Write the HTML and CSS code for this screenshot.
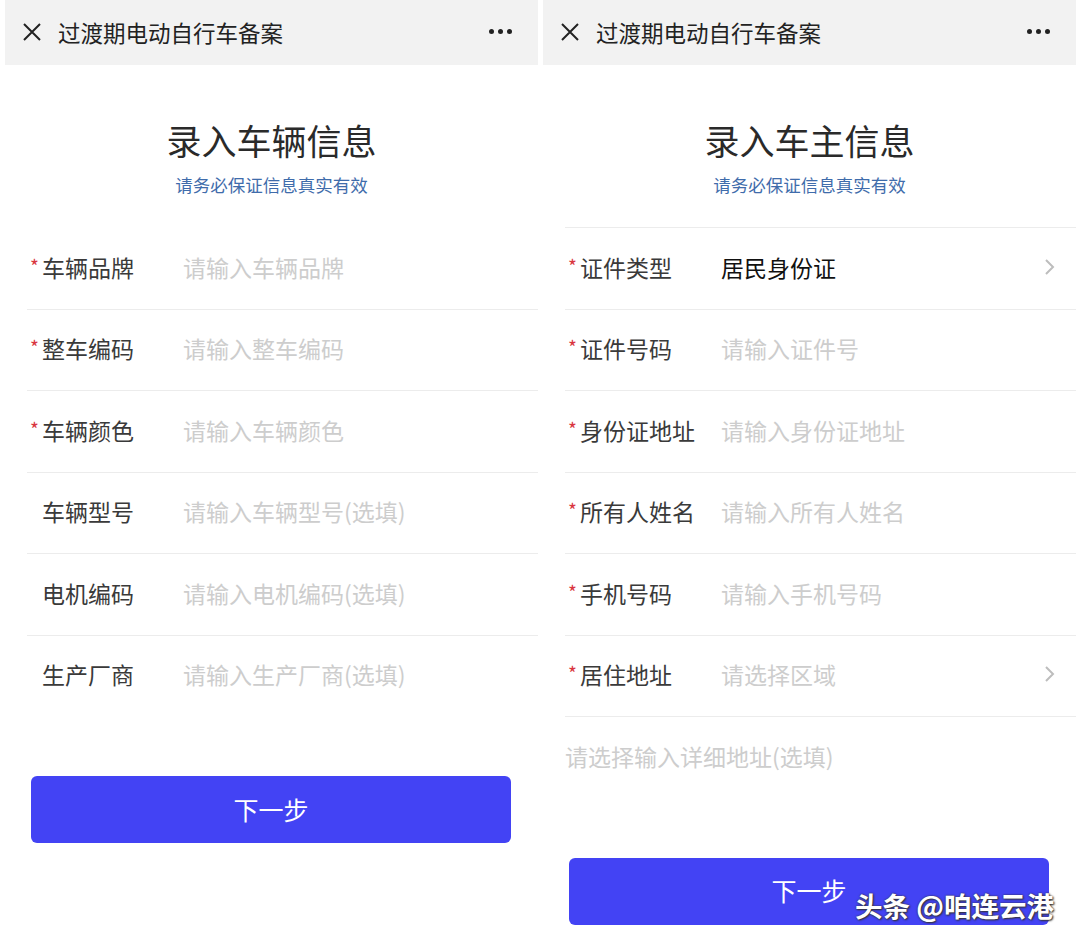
FILE: index.html
```html
<!DOCTYPE html>
<html lang="zh-CN">
<head>
    <meta charset="UTF-8">
    <meta name="viewport" content="width=device-width, initial-scale=1.0">
    <title>过渡期电动自行车备案</title>
    <link rel="stylesheet" href="styles.css">
</head>
<body>
    <div class="screens">
        <!-- 第一步：车辆信息 -->
        <div class="phone">
            <div class="top-bar">
                <svg class="close-icon" width="20" height="20" viewBox="0 0 20 20">
                    <path d="M2 2 L18 18 M18 2 L2 18" stroke="#222" stroke-width="2" fill="none"/>
                </svg>
                <span class="top-title">过渡期电动自行车备案</span>
                <span class="more"><i></i><i></i><i></i></span>
            </div>
            <h1 class="page-title">录入车辆信息</h1>
            <p class="page-tip">请务必保证信息真实有效</p>
            <div class="form">
                <div class="row"><span class="req">*</span><span class="label">车辆品牌</span><span class="ph">请输入车辆品牌</span></div>
                <div class="row"><span class="req">*</span><span class="label">整车编码</span><span class="ph">请输入整车编码</span></div>
                <div class="row"><span class="req">*</span><span class="label">车辆颜色</span><span class="ph">请输入车辆颜色</span></div>
                <div class="row"><span class="req"></span><span class="label">车辆型号</span><span class="ph">请输入车辆型号(选填)</span></div>
                <div class="row"><span class="req"></span><span class="label">电机编码</span><span class="ph">请输入电机编码(选填)</span></div>
                <div class="row last"><span class="req"></span><span class="label">生产厂商</span><span class="ph">请输入生产厂商(选填)</span></div>
            </div>
            <button class="next-btn">下一步</button>
        </div>

        <!-- 第二步：车主信息 -->
        <div class="phone">
            <div class="top-bar">
                <svg class="close-icon" width="20" height="20" viewBox="0 0 20 20">
                    <path d="M2 2 L18 18 M18 2 L2 18" stroke="#222" stroke-width="2" fill="none"/>
                </svg>
                <span class="top-title">过渡期电动自行车备案</span>
                <span class="more"><i></i><i></i><i></i></span>
            </div>
            <h1 class="page-title">录入车主信息</h1>
            <p class="page-tip">请务必保证信息真实有效</p>
            <div class="form bordered">
                <div class="row">
                    <span class="req">*</span><span class="label">证件类型</span><span class="value">居民身份证</span>
                    <svg class="arrow" width="11" height="18" viewBox="0 0 11 18"><path d="M2 2 L9 9 L2 16" stroke="#bdbdbd" stroke-width="2" fill="none"/></svg>
                </div>
                <div class="row"><span class="req">*</span><span class="label">证件号码</span><span class="ph">请输入证件号</span></div>
                <div class="row"><span class="req">*</span><span class="label">身份证地址</span><span class="ph">请输入身份证地址</span></div>
                <div class="row"><span class="req">*</span><span class="label">所有人姓名</span><span class="ph">请输入所有人姓名</span></div>
                <div class="row"><span class="req">*</span><span class="label">手机号码</span><span class="ph">请输入手机号码</span></div>
                <div class="row">
                    <span class="req">*</span><span class="label">居住地址</span><span class="ph">请选择区域</span>
                    <svg class="arrow" width="11" height="18" viewBox="0 0 11 18"><path d="M2 2 L9 9 L2 16" stroke="#bdbdbd" stroke-width="2" fill="none"/></svg>
                </div>
                <div class="row last"><span class="ph">请选择输入详细地址(选填)</span></div>
            </div>
            <button class="next-btn">下一步</button>
            <div class="watermark">头条 @咱连云港</div>
        </div>
    </div>
</body>
</html>
```

FILE: styles.css
```css
body {
    margin: 0;
    background: #fff;
    font-family: "Noto Sans CJK SC", "Noto Sans", sans-serif;
}

.screens {
    display: flex;
    gap: 5px;
    padding-left: 5px;
    height: 947px;
    overflow: hidden;
}

.phone {
    position: relative;
    width: 533px;
    background: #fff;
}

.top-bar {
    display: flex;
    align-items: center;
    height: 65px;
    padding: 0 26px 2px 17px;
    box-sizing: border-box;
    background: #f2f2f2;
}

.close-icon {
    flex: none;
    margin-right: 16px;
}

.top-title {
    flex: 1;
    font-size: 22.5px;
    color: #222;
}

.more {
    display: flex;
    gap: 4px;
}

.more i {
    width: 5px;
    height: 5px;
    border-radius: 50%;
    background: #222;
}

.page-title {
    margin: 53px 0 0;
    text-align: center;
    font-size: 35px;
    font-weight: normal;
    line-height: 44px;
    color: #2a2a2a;
}

.page-tip {
    margin: 11px 0 0;
    text-align: center;
    font-size: 17.5px;
    line-height: 24px;
    color: #3f6cab;
}

.form {
    margin: 30px 0 0 22px;
    border-top: 1px solid transparent;
}

.form.bordered {
    border-top-color: #ececec;
}

.row {
    display: flex;
    align-items: center;
    height: 77.5px;
    padding: 0 21px 3px 0;
    border-bottom: 1px solid #ececec;
    font-size: 23px;
}

.row.last {
    border-bottom: none;
}

.req {
    width: 15px;
    flex: none;
    font-size: 19px;
    color: #d9363e;
    padding-left: 3px;
    box-sizing: border-box;
    margin-top: -3px;
}

.label {
    width: 141px;
    flex: none;
    color: #3a3a3a;
}

.ph {
    flex: 1;
    color: #cdcdcd;
}

.value {
    flex: 1;
    color: #111;
}

.arrow {
    flex: none;
}

.next-btn {
    display: block;
    width: 480px;
    height: 67px;
    margin: 60px 0 0 26px;
    padding-bottom: 3px;
    border: none;
    border-radius: 6px;
    background: #4343f4;
    color: #fff;
    font-family: inherit;
    font-size: 25px;
}

.watermark {
    position: absolute;
    left: 312px;
    top: 885px;
    font-size: 27.5px;
    font-weight: bold;
    color: #fff;
    text-shadow: 0 0 2px #333, 1px 1px 2px #333;
    white-space: nowrap;
}
```
